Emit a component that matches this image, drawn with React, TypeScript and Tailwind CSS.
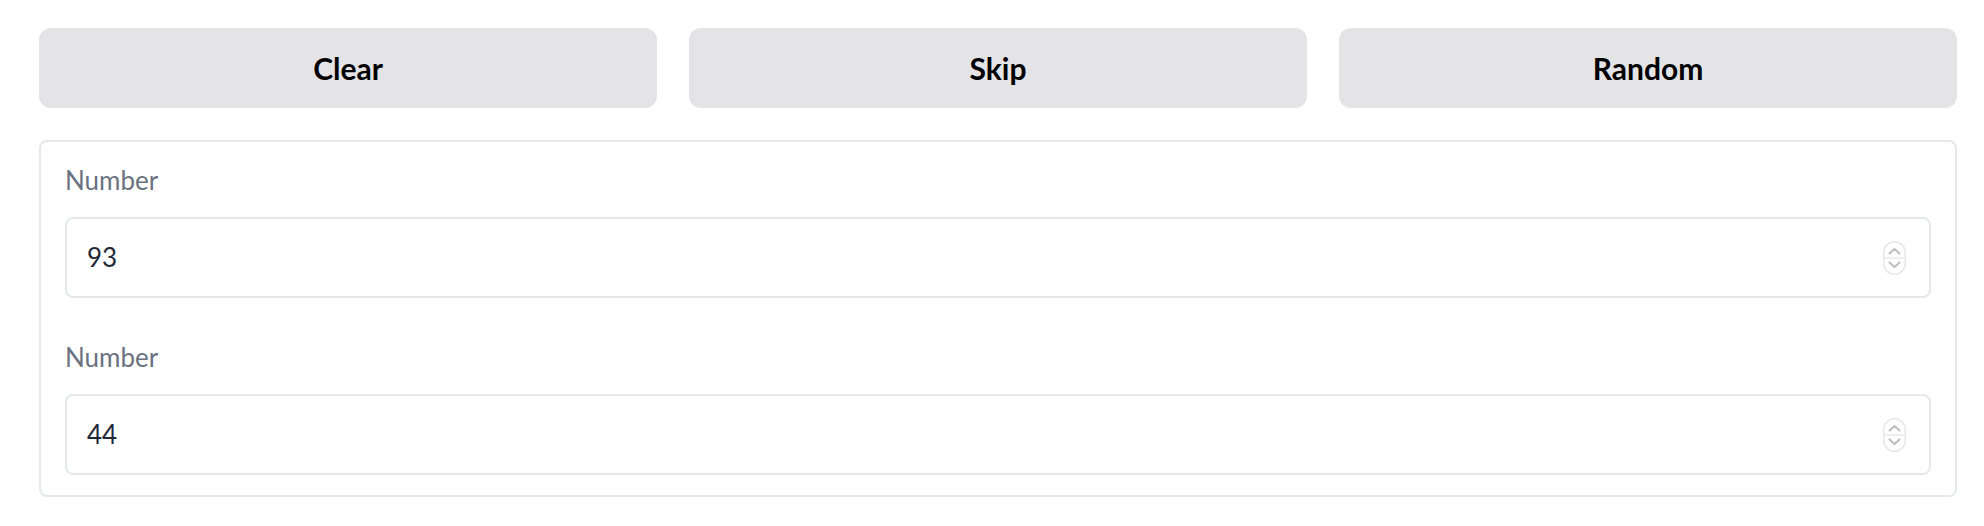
import { useState } from "react";

function Stepper() {
  return (
    <svg width="23" height="34" viewBox="0 0 23 34" className="shrink-0">
      <rect x="0.75" y="0.75" width="21.5" height="32.5" rx="10.75" fill="#ffffff" stroke="#e8e8e8" strokeWidth="1.5" />
      <line x1="1" y1="17" x2="22" y2="17" stroke="#e8e8e8" strokeWidth="1.5" />
      <polyline points="6.5,12.5 11.5,8 16.5,12.5" fill="none" stroke="#bdbdbd" strokeWidth="2" strokeLinecap="round" strokeLinejoin="round" />
      <polyline points="6.5,21.5 11.5,26 16.5,21.5" fill="none" stroke="#bdbdbd" strokeWidth="2" strokeLinecap="round" strokeLinejoin="round" />
    </svg>
  );
}

function NumberField({ value }: { value: number }) {
  return (
    <div className="flex flex-col">
      <span className="block text-[26px] leading-[36px] text-[#6b7280] mb-[19px]">Number</span>
      <div className="flex items-center h-[81px] border-2 border-[#e5e7eb] rounded-[8px] bg-white pl-[20px] pr-[23px]">
        <span className="flex-1 text-[26px] text-[#1f2937]">{value}</span>
        <Stepper />
      </div>
    </div>
  );
}

export default function App() {
  const [values] = useState([93, 44]);

  return (
    <div
      className="min-h-screen bg-white pt-[28px] pl-[39px] pr-[27px]"
      style={{ fontFamily: "Lato, 'Noto Sans', sans-serif" }}
    >
      <div className="grid grid-cols-3 gap-[32px]">
        {["Clear", "Skip", "Random"].map((label) => (
          <button
            key={label}
            className="h-[80px] rounded-[12px] bg-[#e4e4e7] flex items-center justify-center text-[30px] font-bold text-black"
          >
            {label}
          </button>
        ))}
      </div>

      <div className="mt-[32px] border-2 border-[#e5e7eb] rounded-[8px] px-[24px] pt-[20px] pb-[20px] flex flex-col gap-[41px]">
        {values.map((v, i) => (
          <NumberField key={i} value={v} />
        ))}
      </div>
    </div>
  );
}
